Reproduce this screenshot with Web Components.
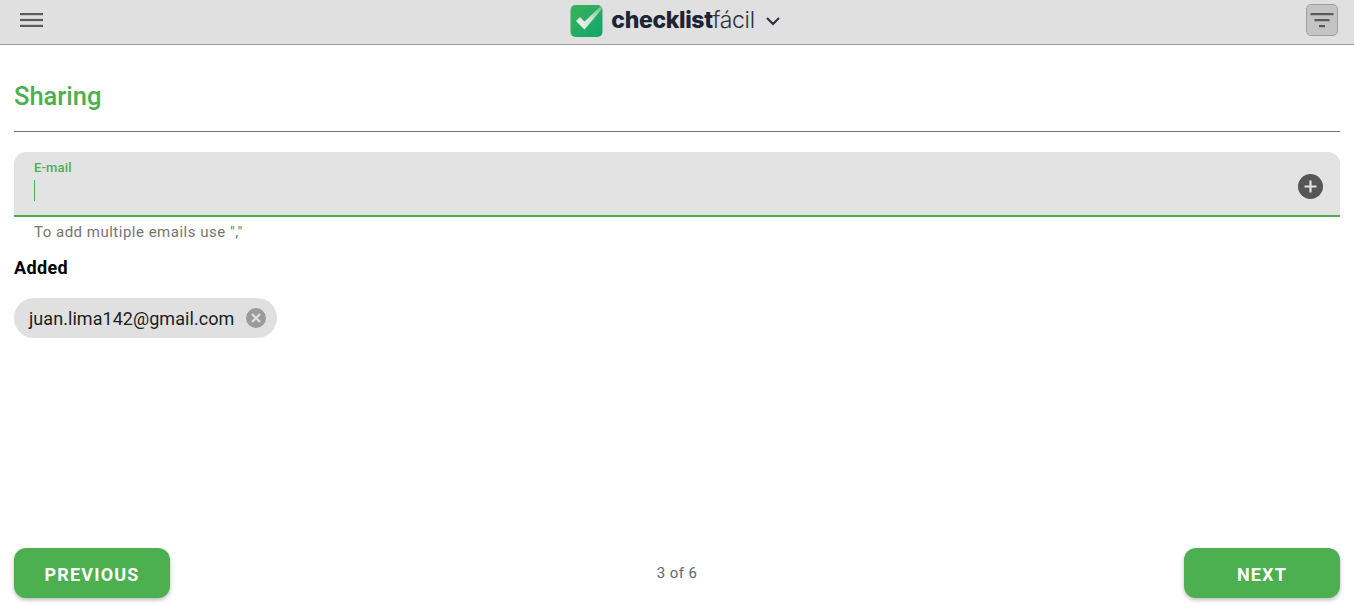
<!DOCTYPE html>
<html lang="en">
<head>
<meta charset="utf-8">
<title>Sharing</title>
<style>
    html, body { margin: 0; height: 100%; background: #fff; }
    body { font-family: Roboto, "Liberation Sans", sans-serif; overflow: hidden; }
</style>
</head>
<body>
<app-page>
    <app-header slot="header"></app-header>
    <section-title>Sharing</section-title>
    <email-field label="E-mail" helper='To add multiple emails use ","'></email-field>
    <added-list heading="Added">
        <email-chip>juan.lima142@gmail.com</email-chip>
    </added-list>
    <wizard-footer slot="footer" step="3 of 6"></wizard-footer>
</app-page>

<script>
class AppPage extends HTMLElement
{
    constructor()
    {
        super();
        this.attachShadow({ mode: 'open' }).innerHTML = `
            <style>
                :host { display: flex; flex-direction: column; height: 616px; box-sizing: border-box; }
                main { flex: 1; display: flex; flex-direction: column; padding: 0 14px; min-height: 0; }
            </style>
            <slot name="header"></slot>
            <main><slot></slot></main>
            <slot name="footer"></slot>
        `;
    }
}

class AppHeader extends HTMLElement
{
    constructor()
    {
        super();
        this.attachShadow({ mode: 'open' }).innerHTML = `
            <style>
                :host
                {
                    display: grid;
                    grid-template-columns: 1fr auto 1fr;
                    align-items: center;
                    height: 40px;
                    padding: 0 16px 4px 20px;
                    background: #e0e0e0;
                    border-bottom: 1px solid #9a9a9a;
                }
                svg { display: block; }
                .logo { display: flex; align-items: center; height: 40px; margin-right: 7px; }
                .word
                {
                    font-family: Inter, "Liberation Sans", sans-serif;
                    font-size: 23px;
                    line-height: 1;
                    color: #1d2433;
                    margin: 0 0 0 8px;
                    letter-spacing: -0.35px;
                    white-space: nowrap;
                }
                .word b { font-weight: 800; }
                .word span { font-weight: 300; color: #2b3242; }
                .chevron { margin-left: 10px; margin-top: 1px; }
                .filter
                {
                    justify-self: end;
                    width: 32px;
                    height: 32px;
                    box-sizing: border-box;
                    background: #c4c4c4;
                    border: 1px solid #9e9e9e;
                    border-radius: 5px;
                    display: flex;
                    align-items: center;
                    justify-content: center;
                }
            </style>
            <svg width="23" height="16" viewBox="0 0 23 16">
                <rect y="1" width="23" height="2.2" fill="#5a5a5a"/>
                <rect y="6.9" width="23" height="2.2" fill="#5a5a5a"/>
                <rect y="12.8" width="23" height="2.2" fill="#5a5a5a"/>
            </svg>
            <div class="logo">
                <svg width="33" height="33" viewBox="0 0 33 33">
                    <defs>
                        <linearGradient id="g" x1="0" y1="0" x2="1" y2="1">
                            <stop offset="0" stop-color="#3bb35a"/>
                            <stop offset="1" stop-color="#0fa56d"/>
                        </linearGradient>
                        <linearGradient id="c" x1="0" y1="1" x2="1" y2="0">
                            <stop offset="0" stop-color="#f4f6f4"/>
                            <stop offset=".5" stop-color="#d5e2d7"/>
                            <stop offset="1" stop-color="#6cc283"/>
                        </linearGradient>
                    </defs>
                    <rect x="0.5" y="1" width="32" height="32" rx="5" fill="url(#g)"/>
                    <path d="M6 17 10 13 14.500 17.500 31 2 31.500 5.500 14.500 25.500Z" fill="url(#c)"/>
                </svg>
                <div class="word"><b>checklist</b><span>fácil</span></div>
                <svg class="chevron" width="16" height="10" viewBox="0 0 16 10">
                    <path d="M2 2l6 6 6-6" fill="none" stroke="#2a2f3a" stroke-width="2"/>
                </svg>
            </div>
            <div class="filter">
                <svg width="24" height="18" viewBox="0 0 24 18">
                    <rect x="0.5" y="2" width="23" height="2.2" fill="#5a5a5a"/>
                    <rect x="4.5" y="8" width="15" height="2.2" fill="#5a5a5a"/>
                    <rect x="9" y="14" width="6" height="2.2" fill="#5a5a5a"/>
                </svg>
            </div>
        `;
    }
}

class SectionTitle extends HTMLElement
{
    constructor()
    {
        super();
        this.attachShadow({ mode: 'open' }).innerHTML = `
            <style>
                :host
                {
                    display: block;
                    padding-top: 35px;
                    height: 51px;
                    border-bottom: 1px solid #757575;
                    font-size: 25.5px;
                    line-height: 32px;
                    font-weight: 500;
                    color: #4caf50;
                }
            </style>
            <slot></slot>
        `;
    }
}

class EmailField extends HTMLElement
{
    constructor()
    {
        super();
        this.attachShadow({ mode: 'open' }).innerHTML = `
            <style>
                :host { display: block; margin-top: 20px; }
                .box
                {
                    height: 54px;
                    padding: 9px 17px 0 20px;
                    background: #e3e3e3;
                    border-bottom: 2px solid #4caf50;
                    border-radius: 12px 12px 0 0;
                    display: flex;
                    justify-content: space-between;
                }
                .text { display: flex; flex-direction: column; }
                label { font-size: 13px; line-height: 14px; font-weight: 500; letter-spacing: 0.15px; color: #4caf50; }
                .caret { width: 1px; height: 21px; background: #4caf50; margin-top: 5px; }
                svg { display: block; margin-top: 13px; }
                .helper
                {
                    padding: 7px 20px 0;
                    font-size: 15px;
                    line-height: 17px;
                    letter-spacing: 0.5px;
                    color: #757575;
                }
            </style>
            <div class="box">
                <div class="text">
                    <label></label>
                    <div class="caret"></div>
                </div>
                <svg width="25" height="25" viewBox="0 0 25 25">
                    <circle cx="12.5" cy="12.5" r="12.5" fill="#565656"/>
                    <path d="M12.5 6.500v12M6.500 12.500h12" stroke="#e3e3e3" stroke-width="2.2"/>
                </svg>
            </div>
            <div class="helper"></div>
        `;
    }

    connectedCallback()
    {
        this.shadowRoot.querySelector('label').textContent = this.getAttribute('label');
        this.shadowRoot.querySelector('.helper').textContent = this.getAttribute('helper');
    }
}

class AddedList extends HTMLElement
{
    constructor()
    {
        super();
        this.attachShadow({ mode: 'open' }).innerHTML = `
            <style>
                :host { display: block; margin-top: 16px; }
                h2 { margin: 0 0 19px; font-size: 18px; line-height: 22px; font-weight: 700; letter-spacing: 0.35px; color: #000; }
                .chips { display: flex; flex-wrap: wrap; gap: 8px; }
            </style>
            <h2></h2>
            <div class="chips"><slot></slot></div>
        `;
    }

    connectedCallback()
    {
        this.shadowRoot.querySelector('h2').textContent = this.getAttribute('heading');
    }
}

class EmailChip extends HTMLElement
{
    constructor()
    {
        super();
        this.attachShadow({ mode: 'open' }).innerHTML = `
            <style>
                :host
                {
                    display: inline-flex;
                    align-items: center;
                    gap: 12px;
                    height: 40px;
                    padding: 0 11px 0 15px;
                    background: #e0e0e0;
                    border-radius: 20px;
                    font-size: 18px;
                    letter-spacing: 0.05px;
                    color: #212121;
                }
                svg { display: block; }
            </style>
            <slot></slot>
            <svg width="20" height="20" viewBox="0 0 20 20">
                <circle cx="10" cy="10" r="10" fill="#9b9b9b"/>
                <path d="M6 6l8 8M14 6l-8 8" stroke="#e0e0e0" stroke-width="2.2"/>
            </svg>
        `;
    }
}

class WizardFooter extends HTMLElement
{
    constructor()
    {
        super();
        this.attachShadow({ mode: 'open' }).innerHTML = `
            <style>
                :host
                {
                    display: grid;
                    grid-template-columns: 1fr auto 1fr;
                    align-items: center;
                    padding: 0 14px 18px;
                }
                button
                {
                    width: 156px;
                    height: 50px;
                    padding: 2px 0 0;
                    border: 0;
                    border-radius: 12px;
                    background: #4caf50;
                    color: #fff;
                    font: 700 18px Roboto, "Liberation Sans", sans-serif;
                    letter-spacing: 1.2px;
                    box-shadow: 0 2px 4px #0004;
                }
                .next { justify-self: end; }
                span { font-size: 15px; letter-spacing: 0.4px; color: #666; }
            </style>
            <button>PREVIOUS</button>
            <span></span>
            <button class="next">NEXT</button>
        `;
    }

    connectedCallback()
    {
        this.shadowRoot.querySelector('span').textContent = this.getAttribute('step');
    }
}

customElements.define('app-page', AppPage);
customElements.define('app-header', AppHeader);
customElements.define('section-title', SectionTitle);
customElements.define('email-field', EmailField);
customElements.define('added-list', AddedList);
customElements.define('email-chip', EmailChip);
customElements.define('wizard-footer', WizardFooter);
</script>
</body>
</html>
